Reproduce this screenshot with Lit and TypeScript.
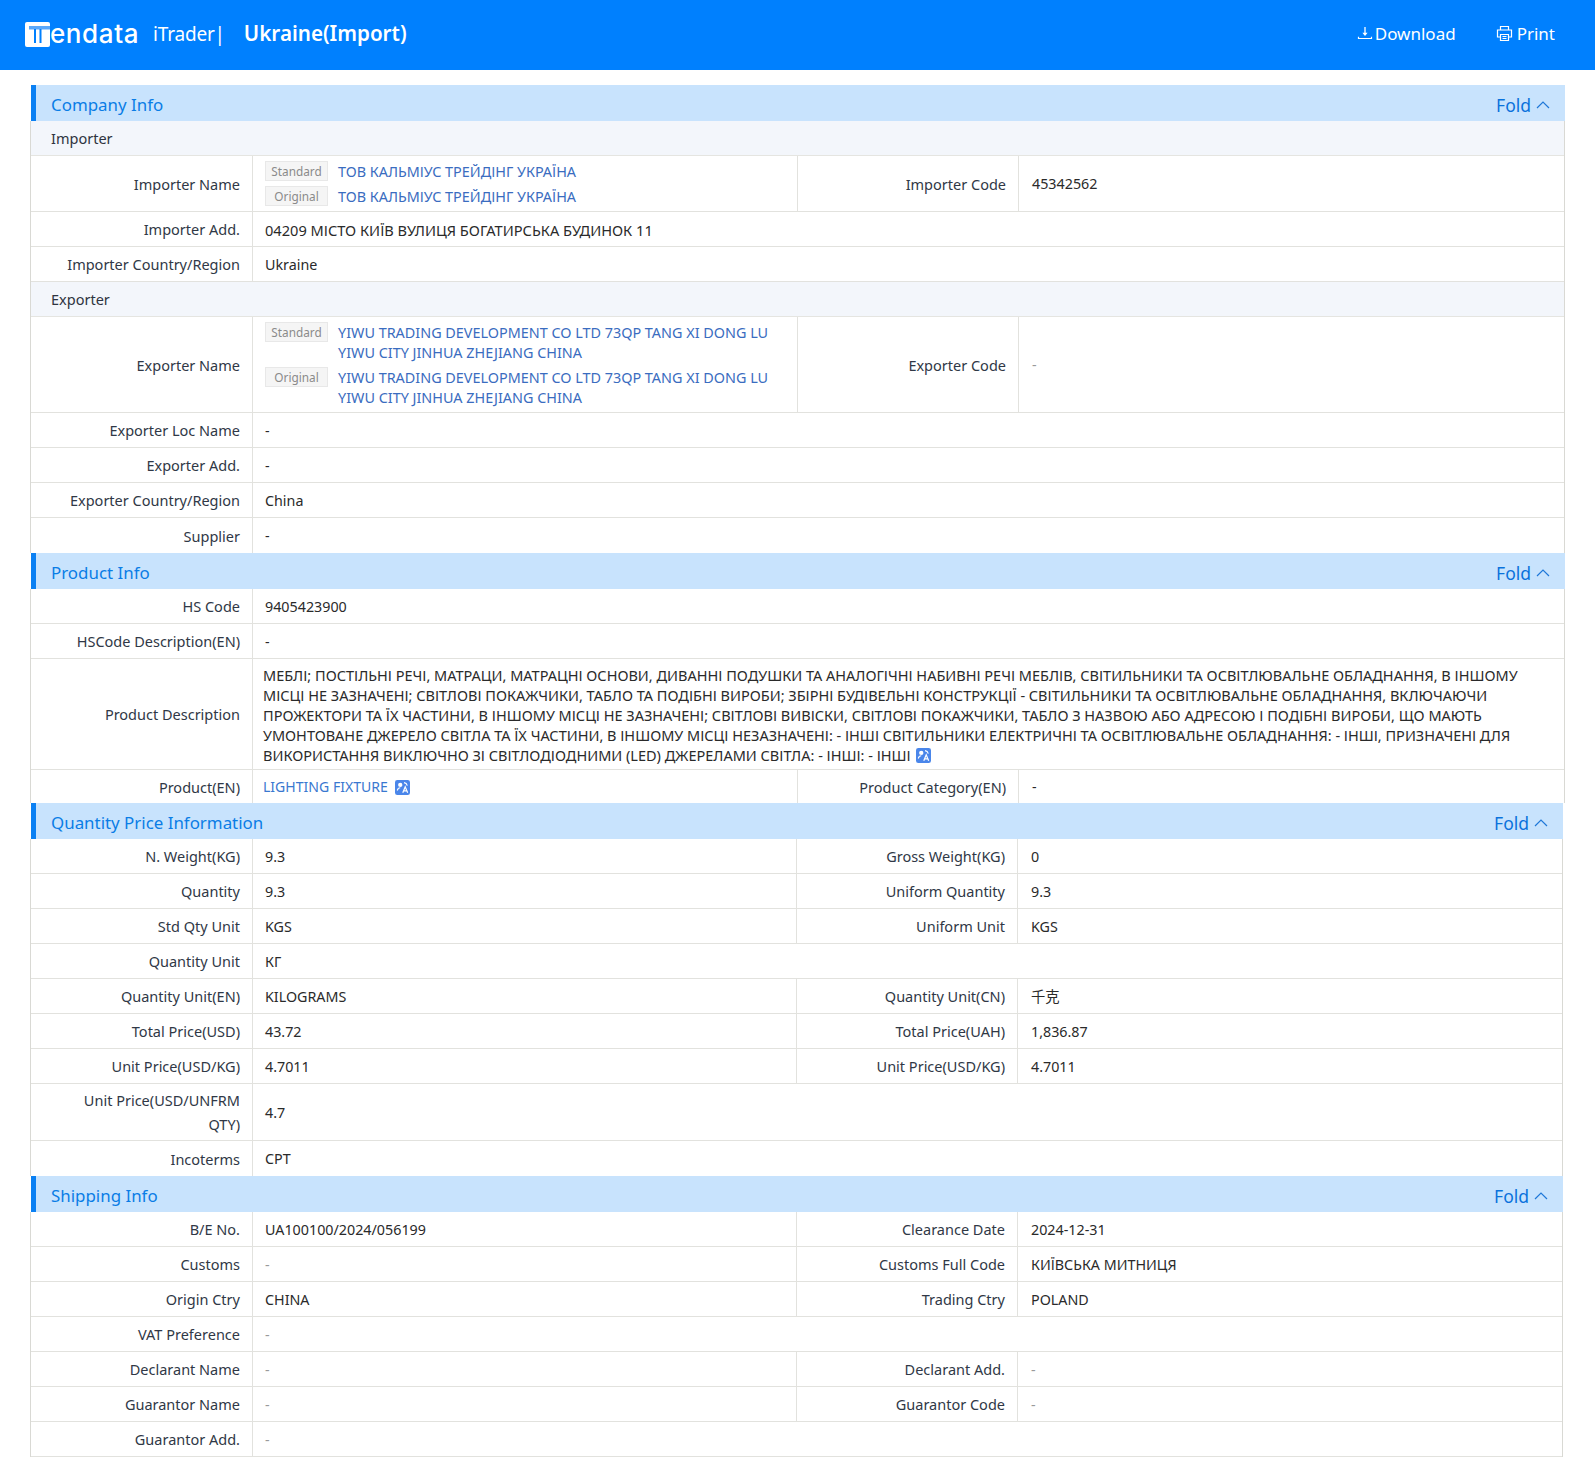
import { LitElement, html, css, nothing } from 'lit'
import { customElement } from 'lit/decorators.js'

type Cell = { label: string; value?: string; muted?: boolean }

const translateIcon = html`<svg class="tr" viewBox="0 0 16 16" aria-hidden="true">
  <rect width="16" height="16" rx="2.5" fill="#4a86ea"/>
  <circle cx="5.600" cy="5.200" r="2.300" fill="#fff"/>
  <path d="M2.400 11.200c.5-2 1.600-3 3.200-3M9.600 2.800c1.900.3 3.100 1.400 3.500 3.200" fill="none" stroke="#fff" stroke-width="1.200"/>
  <path d="M8.300 13.600 10.900 7.200l2.600 6.400M9.200 11.600h3.400" fill="none" stroke="#fff" stroke-width="1.300"/>
</svg>`

@customElement('app-root')
export class AppRoot extends LitElement {
  static styles = css`
    :host {
      display: block;
      font-family: "Noto Sans", "Noto Sans CJK SC", sans-serif;
      font-size: 14.3px;
      color: #2a2a2a;
      background: #fff;
      min-height: 1469px;
    }
    .top {
      height: 70px;
      box-sizing: border-box;
      background: #0080fe;
      color: #fff;
      display: flex;
      align-items: center;
      padding: 0 40px 4px 25px;
    }
    .logo { display: flex; align-items: center; margin-top: 2px; }
    .logo svg { width: 25px; height: 25px; display: block; }
    .logo .word {
      font-family: Inter, sans-serif;
      font-size: 26px;
      font-weight: 500;
      line-height: 26px;
      letter-spacing: 0.6px;
    }
    .brand-sub {
      font-size: 19px;
      margin-left: 14px;
      letter-spacing: -0.2px;
      margin-top: 1px;
    }
    .country { font-size: 20.6px; font-weight: 600; margin-left: 19px; }
    .actions { margin-left: auto; display: flex; gap: 40px; font-size: 17px; }
    .actions span { display: flex; align-items: center; gap: 2px; }
    .actions svg { width: 16px; height: 16px; }
    .actions .print svg { width: 17px; height: 17px; margin-right: 2px; }

    .page { padding: 15px 0 11px 31px; }
    .block { width: 1534px; }
    .block.narrow { width: 1532px; }
    .title {
      height: 36px;
      box-sizing: border-box;
      background: #c8e3fd;
      border-left: 5px solid #0a80f3;
      padding: 3px 15px 0;
      display: flex;
      align-items: center;
      justify-content: space-between;
      font-size: 16.9px;
      color: #0a7de6;
    }
    .fold { display: flex; align-items: center; gap: 5px; font-size: 17.5px; color: #0a72dc; }
    .fold svg { width: 14px; height: 8px; color: #1f78d8; }
    .body { margin-left: -1px; border-left: 1px solid #d9d9d4; border-right: 1px solid #d9d9d4; }
    .sub {
      height: 35px;
      box-sizing: border-box;
      padding: 0 20px;
      display: flex;
      align-items: center;
      font-size: 14.5px;
      background: #f3f6fb;
      border-bottom: 1px solid #e5e5e1;
      color: #2e3440;
    }
    .row { display: flex; border-bottom: 1px solid #e2e2de; }
    .row.last { border-bottom: none; }
    .row.last .value { min-height: 35px; }
    .row.tight .value { min-height: 33px; }
    .label {
      width: 220px;
      flex: none;
      box-sizing: border-box;
      display: flex;
      align-items: center;
      justify-content: flex-end;
      text-align: right;
      line-height: 24px;
      padding: 4px 12px 4px 20px;
      font-size: 14.5px;
      color: #303846;
    }
    .label:first-child { width: 221px; }
    .value {
      flex: 1;
      min-width: 0;
      box-sizing: border-box;
      display: flex;
      align-items: center;
      border-left: 1px solid #e2e2de;
      padding: 1px 13px 0;
      min-height: 34px;
      line-height: 20px;
    }
    .value.half { flex: none; width: 546px; border-right: 1px solid #e2e2de; padding: 1px 12px 0; }
    .narrow .value.half { width: 545px; }
    .value.muted { color: #9a9a9a; }
    .value.wide { font-size: 14.6px; padding: 1px 12px 0; }
    .value.first { padding: 1px 12px 0; }
    .names { display: block; width: 100%; padding: 5px 0 4px; font-size: 14.4px; }
    .name { display: flex; align-items: flex-start; gap: 10px; margin-bottom: 5px; color: #3a6cc0; }
    .name:last-child { margin-bottom: 0; }
    .tag {
      flex: none;
      width: 63px;
      height: 20px;
      margin-top: -1px;
      box-sizing: border-box;
      background: #f5f5f5;
      border: 1px solid #e8e8e8;
      color: #8a8a8a;
      font-size: 11.8px;
      line-height: 18px;
      text-align: center;
    }
    .value.desc { padding: 6px 10px 4px; display: block; font-size: 14.5px; }
    .desc .tr { margin-left: 2px; }
    .value.half.prod { padding: 1px 10px 0; }
    .link { color: #3a78d0; font-size: 14.05px; }
    .tr { width: 15px; height: 15px; vertical-align: -2px; margin-left: 7px; display: inline-block; }
  `

  private field(c: Cell, half: boolean) {
    return html`<div class="label">${c.label}</div>
      <div class="value ${half ? 'half' : ''} ${c.muted ? 'muted' : ''}">${c.value ?? '-'}</div>`
  }

  private row(cells: Cell[], last = false) {
    return html`<div class="row ${last ? 'last' : ''}">
      ${cells.length === 2
        ? html`${this.field(cells[0], true)}${this.field(cells[1], false)}`
        : html`<div class="label">${cells[0].label}</div>
            <div class="value first ${cells[0].muted ? 'muted' : ''}">${cells[0].value ?? '-'}</div>`}
    </div>`
  }

  private title(name: string) {
    return html`<div class="title">
      <span>${name}</span>
      <span class="fold">Fold
        <svg viewBox="0 0 14 8"><path d="M1 7 7 1l6 6" fill="none" stroke="currentColor" stroke-width="1.200"/></svg>
      </span>
    </div>`
  }

  private names(std: string[], orig: string[]) {
    const item = (tag: string, lines: string[]) =>
      html`<div class="name"><span class="tag">${tag}</span><span>${lines.map((l, i) => html`${i ? html`<br />` : nothing}${l}`)}</span></div>`
    return html`<div class="value half"><div class="names">${item('Standard', std)}${item('Original', orig)}</div></div>`
  }

  render() {
    const imp = ['ТОВ КАЛЬМІУС ТРЕЙДІНГ УКРАЇНА']
    const exp = ['YIWU TRADING DEVELOPMENT CO LTD 73QP TANG XI DONG LU', 'YIWU CITY JINHUA ZHEJIANG CHINA']
    return html`
      <header class="top">
        <div class="logo">
          <svg viewBox="0 0 25 25">
            <rect width="25" height="25" rx="2" fill="#fff"/>
            <path d="M4 4h21v3.500H4z" fill="#5aa8fb"/>
            <path d="M9 7h2v14H9zM14.500 7h2v14h-2z" fill="#0080fe"/>
          </svg>
          <span class="word">endata</span>
        </div>
        <span class="brand-sub">iTrader|</span>
        <span class="country">Ukraine(Import)</span>
        <div class="actions">
          <span>
            <svg viewBox="0 0 16 16">
              <path d="M8 2v7" fill="none" stroke="#fff" stroke-width="1.300"/>
              <path d="M5.400 7.800h5.200L8 11z" fill="#fff"/>
              <path d="M1.500 11.800v1.700h13v-1.700" fill="none" stroke="#fff" stroke-width="1.200"/>
            </svg>
            Download
          </span>
          <span class="print">
            <svg viewBox="0 0 17 17"><path d="M4.500 5V1.500h8V5M4.500 12H1.500V5h14v7h-3M4.500 9.500h8v6h-8zM6.500 11.500h4M6.500 13.500h4" fill="none" stroke="#fff" stroke-width="1.200"/></svg>
            Print
          </span>
        </div>
      </header>
      <main class="page">
        <section class="block">
          ${this.title('Company Info')}
          <div class="body">
            <div class="sub">Importer</div>
            <div class="row">
              <div class="label">Importer Name</div>
              ${this.names(imp, imp)}
              <div class="label">Importer Code</div>
              <div class="value">45342562</div>
            </div>
            <div class="row">
              <div class="label">Importer Add.</div>
              <div class="value wide">04209 МІСТО КИЇВ ВУЛИЦЯ БОГАТИРСЬКА БУДИНОК 11</div>
            </div>
            ${this.row([{ label: 'Importer Country/Region', value: 'Ukraine' }])}
            <div class="sub">Exporter</div>
            <div class="row">
              <div class="label">Exporter Name</div>
              ${this.names(exp, exp)}
              <div class="label">Exporter Code</div>
              <div class="value muted">-</div>
            </div>
            ${this.row([{ label: 'Exporter Loc Name' }])}
            ${this.row([{ label: 'Exporter Add.' }])}
            ${this.row([{ label: 'Exporter Country/Region', value: 'China' }])}
            ${this.row([{ label: 'Supplier' }], true)}
          </div>
        </section>
        <section class="block">
          ${this.title('Product Info')}
          <div class="body">
            ${this.row([{ label: 'HS Code', value: '9405423900' }])}
            ${this.row([{ label: 'HSCode Description(EN)' }])}
            <div class="row">
              <div class="label">Product Description</div>
              <div class="value desc">МЕБЛІ; ПОСТІЛЬНІ РЕЧІ, МАТРАЦИ, МАТРАЦНІ ОСНОВИ, ДИВАННІ ПОДУШКИ ТА АНАЛОГІЧНІ НАБИВНІ РЕЧІ МЕБЛІВ, СВІТИЛЬНИКИ ТА ОСВІТЛЮВАЛЬНЕ ОБЛАДНАННЯ, В ІНШОМУ МІСЦІ НЕ ЗАЗНАЧЕНІ; СВІТЛОВІ ПОКАЖЧИКИ, ТАБЛО ТА ПОДІБНІ ВИРОБИ; ЗБІРНІ БУДІВЕЛЬНІ КОНСТРУКЦІЇ - СВІТИЛЬНИКИ ТА ОСВІТЛЮВАЛЬНЕ ОБЛАДНАННЯ, ВКЛЮЧАЮЧИ ПРОЖЕКТОРИ ТА ЇХ ЧАСТИНИ, В ІНШОМУ МІСЦІ НЕ ЗАЗНАЧЕНІ; СВІТЛОВІ ВИВІСКИ, СВІТЛОВІ ПОКАЖЧИКИ, ТАБЛО З НАЗВОЮ АБО АДРЕСОЮ І ПОДІБНІ ВИРОБИ, ЩО МАЮТЬ УМОНТОВАНЕ ДЖЕРЕЛО СВІТЛА ТА ЇХ ЧАСТИНИ, В ІНШОМУ МІСЦІ НЕЗАЗНАЧЕНІ: - ІНШІ СВІТИЛЬНИКИ ЕЛЕКТРИЧНІ ТА ОСВІТЛЮВАЛЬНЕ ОБЛАДНАННЯ: - ІНШІ, ПРИЗНАЧЕНІ ДЛЯ ВИКОРИСТАННЯ ВИКЛЮЧНО ЗІ СВІТЛОДІОДНИМИ (LED) ДЖЕРЕЛАМИ СВІТЛА: - ІНШІ: - ІНШІ ${translateIcon}</div>
            </div>
            <div class="row last tight">
              <div class="label">Product(EN)</div>
              <div class="value half prod"><span class="link">LIGHTING FIXTURE</span>${translateIcon}</div>
              <div class="label">Product Category(EN)</div>
              <div class="value">-</div>
            </div>
          </div>
        </section>
        <section class="block narrow">
          ${this.title('Quantity Price Information')}
          <div class="body">
            ${this.row([{ label: 'N. Weight(KG)', value: '9.3' }, { label: 'Gross Weight(KG)', value: '0' }])}
            ${this.row([{ label: 'Quantity', value: '9.3' }, { label: 'Uniform Quantity', value: '9.3' }])}
            ${this.row([{ label: 'Std Qty Unit', value: 'KGS' }, { label: 'Uniform Unit', value: 'KGS' }])}
            ${this.row([{ label: 'Quantity Unit', value: 'КГ' }])}
            ${this.row([{ label: 'Quantity Unit(EN)', value: 'KILOGRAMS' }, { label: 'Quantity Unit(CN)', value: '千克' }])}
            ${this.row([{ label: 'Total Price(USD)', value: '43.72' }, { label: 'Total Price(UAH)', value: '1,836.87' }])}
            ${this.row([{ label: 'Unit Price(USD/KG)', value: '4.7011' }, { label: 'Unit Price(USD/KG)', value: '4.7011' }])}
            ${this.row([{ label: 'Unit Price(USD/UNFRM QTY)', value: '4.7' }])}
            ${this.row([{ label: 'Incoterms', value: 'CPT' }], true)}
          </div>
        </section>
        <section class="block narrow">
          ${this.title('Shipping Info')}
          <div class="body">
            ${this.row([{ label: 'B/E No.', value: 'UA100100/2024/056199' }, { label: 'Clearance Date', value: '2024-12-31' }])}
            ${this.row([{ label: 'Customs', muted: true }, { label: 'Customs Full Code', value: 'КИЇВСЬКА МИТНИЦЯ' }])}
            ${this.row([{ label: 'Origin Ctry', value: 'CHINA' }, { label: 'Trading Ctry', value: 'POLAND' }])}
            ${this.row([{ label: 'VAT Preference', muted: true }])}
            ${this.row([{ label: 'Declarant Name', muted: true }, { label: 'Declarant Add.', muted: true }])}
            ${this.row([{ label: 'Guarantor Name', muted: true }, { label: 'Guarantor Code', muted: true }])}
            ${this.row([{ label: 'Guarantor Add.', muted: true }])}
          </div>
        </section>
      </main>
    `
  }
}
